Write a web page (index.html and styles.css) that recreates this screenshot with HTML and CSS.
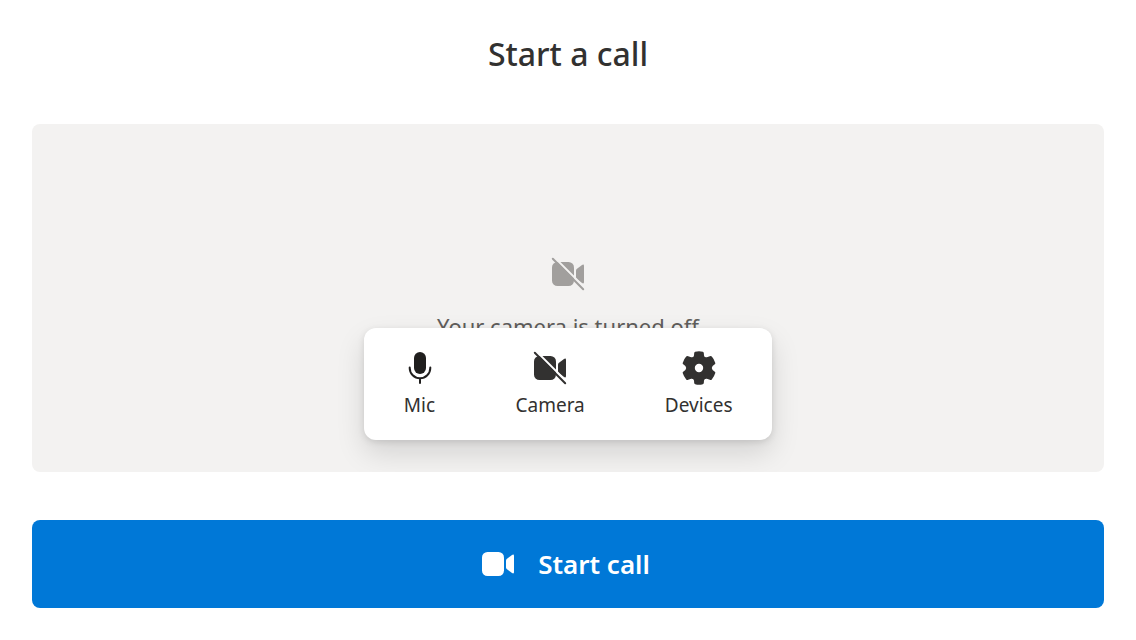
FILE: index.html
```html
<!DOCTYPE html>
<html lang="en">
<head>
<meta charset="utf-8">
<meta name="viewport" content="width=device-width, initial-scale=1">
<title>Start a call</title>
<link rel="stylesheet" href="styles.css">
</head>
<body>
<main class="page">
  <h1 class="title">Start a call</h1>
  <section class="preview" aria-label="Camera preview">
    <svg class="icon icon-muted" viewBox="0 0 32 32" aria-hidden="true">
      <rect x="0" y="4" width="22" height="24" rx="5.500"/>
      <path d="M24 12.500Q24 11.700 24.700 11.100L30 7Q32 5.800 32 8V24Q32 26.200 30 25L24.700 20.900Q24 20.300 24 19.500Z"/>
      <path class="slash-gap" d="M2.500-.5 33 30"/>
      <path class="slash" d="M.8.8 31.200 31.200"/>
    </svg>
    <p class="status">Your camera is turned off</p>
    <div class="controls">
      <button class="control" type="button">
        <svg class="icon icon-mic" viewBox="0 0 32 32" aria-hidden="true">
          <rect x="10" y="0" width="12" height="22" rx="6"/>
          <path class="mic-line" d="M5.700 15.500V16a10.300 10.300 0 0 0 20.600 0V15.500M16 26.500V31"/>
        </svg>
        <span>Mic</span>
      </button>
      <button class="control" type="button">
        <svg class="icon icon-camera" viewBox="0 0 32 32" aria-hidden="true">
          <rect x="0" y="4" width="22" height="24" rx="5.500"/>
          <path d="M24 12.500Q24 11.700 24.700 11.100L30 7Q32 5.800 32 8V24Q32 26.200 30 25L24.700 20.900Q24 20.300 24 19.500Z"/>
          <path class="slash-gap" d="M2.500-.5 33 30"/>
          <path class="slash" d="M.8.8 31.200 31.200"/>
        </svg>
        <span>Camera</span>
      </button>
      <button class="control" type="button">
        <svg class="icon" viewBox="0 0 32 32" aria-hidden="true">
          <path fill-rule="evenodd" d="M12.200-.3Q16-1.300 19.800-.3 20.700 0 20.800.9L21 3.400Q21.400 5.700 23.800 5.300L26.800 4.200Q28 3.700 28.800 4.600 31.200 7.300 32.300 10.900 32.500 11.800 31.800 12.300L29.600 13.900Q27.900 16 29.600 18.100L31.800 19.700Q32.500 20.200 32.300 21.100 31.200 24.700 28.800 27.400 28 28.300 26.800 27.800L23.800 26.700Q21.400 26.300 21 28.600L20.800 31.100Q20.700 32 19.800 32.300 16 33.300 12.200 32.300 11.300 32 11.200 31.100L11 28.600Q10.600 26.300 8.200 26.700L5.200 27.800Q4 28.300 3.200 27.400 .8 24.700-.3 21.100-.5 20.200.2 19.700L2.400 18.100Q4.100 16 2.400 13.900L.2 12.300Q-.5 11.800-.3 10.900.8 7.300 3.200 4.600 4 3.700 5.200 4.200L8.200 5.300Q10.600 5.700 11 3.400L11.200.9Q11.300 0 12.200-.3ZM16 11.800A4.200 4.200 0 1 0 16 20.200 4.200 4.200 0 0 0 16 11.800Z"/>
        </svg>
        <span>Devices</span>
      </button>
    </div>
  </section>
  <button class="start" type="button">
    <svg class="icon" viewBox="0 0 32 32" aria-hidden="true">
      <rect x="0" y="4" width="22" height="24" rx="5.500"/>
      <path d="M24 12.500Q24 11.700 24.700 11.100L30 7Q32 5.800 32 8V24Q32 26.200 30 25L24.700 20.900Q24 20.300 24 19.500Z"/>
    </svg>
    <span>Start call</span>
  </button>
</main>
</body>
</html>
```
FILE: styles.css
```css
* {
  box-sizing: border-box;
}

body {
  margin: 0;
  background: #fff;
  color: #323130;
  font-family: "Segoe UI", "Noto Sans", "Open Sans", sans-serif;
}

.page {
  display: flex;
  flex-direction: column;
  min-height: 100vh;
  padding: 32px;
}

.title {
  margin: 0 0 48px;
  font-size: 32px;
  line-height: 44px;
  font-weight: 500;
  text-align: center;
}

.preview {
  position: relative;
  display: flex;
  flex: 1;
  flex-direction: column;
  align-items: center;
  justify-content: center;
  gap: 24px;
  margin-bottom: 48px;
  border-radius: 8px;
  background: #f3f2f1;
  overflow: hidden;
}

.icon {
  width: 32px;
  height: 32px;
  flex: none;
  fill: currentColor;
  overflow: visible;
}

.icon-muted {
  color: #a19f9d;
}

.icon-mic {
  color: #201f1e;
}

.slash {
  fill: none;
  stroke: currentColor;
  stroke-width: 2;
  stroke-linecap: round;
}

.slash-gap {
  fill: none;
  stroke: #fff;
  stroke-width: 2;
}

.icon-muted .slash-gap {
  stroke: #f3f2f1;
}

.mic-line {
  fill: none;
  stroke: currentColor;
  stroke-width: 2;
  stroke-linecap: round;
}

.status {
  margin: 0;
  color: #605e5c;
  font-size: 22px;
  line-height: 24px;
}

.controls {
  position: absolute;
  bottom: 32px;
  display: flex;
  gap: 80px;
  padding: 24px 40px 22px;
  border-radius: 12px;
  background: #fff;
  box-shadow: 0 13px 29px rgba(0, 0, 0, 0.13), 0 2px 7px rgba(0, 0, 0, 0.11);
}

.control {
  display: flex;
  flex-direction: column;
  align-items: center;
  gap: 8px;
  padding: 0;
  border: 0;
  background: none;
  color: #323130;
  font: inherit;
  font-size: 19px;
  line-height: 26px;
}

.start {
  display: flex;
  align-items: center;
  justify-content: center;
  gap: 24px;
  min-height: 88px;
  padding: 0 4px 0 0;
  border: 0;
  border-radius: 8px;
  background: #0078d7;
  color: #fff;
  font: inherit;
  font-size: 26px;
  font-weight: 600;
  line-height: 36px;
}
```
